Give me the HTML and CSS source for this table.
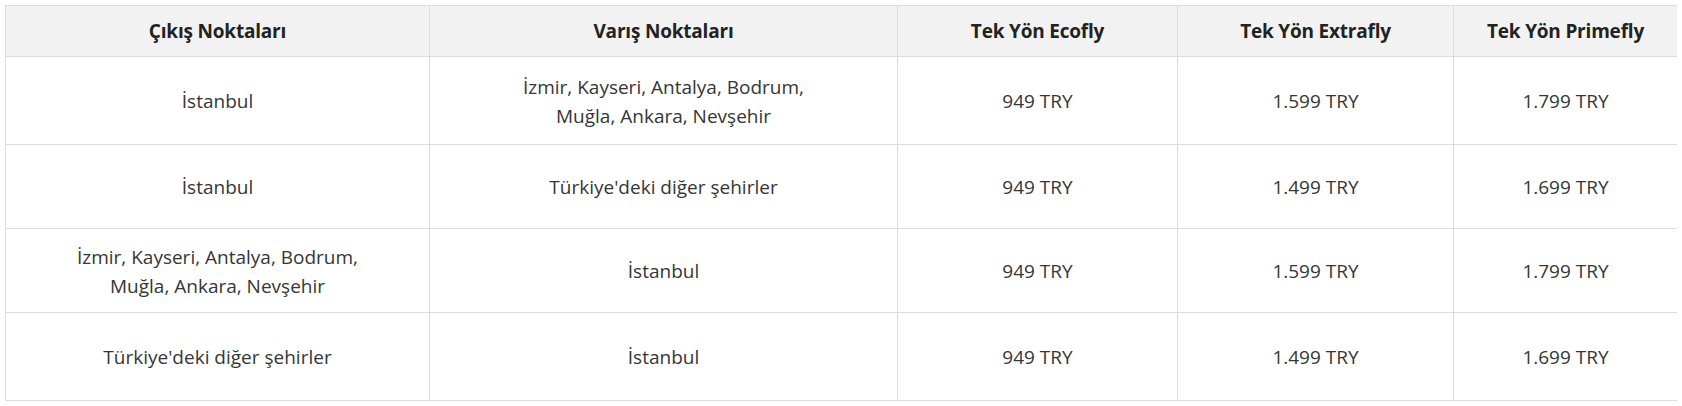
FILE: index.html
```html
<!DOCTYPE html>
<html lang="tr">
<head>
<meta charset="utf-8">
<link rel="stylesheet" href="styles.css">
</head>
<body>
<table class="fares">
  <colgroup>
    <col class="c1"><col class="c2"><col class="c3"><col class="c4"><col class="c5">
  </colgroup>
  <thead>
    <tr>
      <th>Çıkış Noktaları</th>
      <th>Varış Noktaları</th>
      <th>Tek Yön Ecofly</th>
      <th>Tek Yön Extrafly</th>
      <th>Tek Yön Primefly</th>
    </tr>
  </thead>
  <tbody>
    <tr>
      <td>İstanbul</td>
      <td>İzmir, Kayseri, Antalya, Bodrum,<br>Muğla, Ankara, Nevşehir</td>
      <td>949 TRY</td>
      <td>1.599 TRY</td>
      <td>1.799 TRY</td>
    </tr>
    <tr>
      <td>İstanbul</td>
      <td>Türkiye'deki diğer şehirler</td>
      <td>949 TRY</td>
      <td>1.499 TRY</td>
      <td>1.699 TRY</td>
    </tr>
    <tr>
      <td>İzmir, Kayseri, Antalya, Bodrum,<br>Muğla, Ankara, Nevşehir</td>
      <td>İstanbul</td>
      <td>949 TRY</td>
      <td>1.599 TRY</td>
      <td>1.799 TRY</td>
    </tr>
    <tr>
      <td>Türkiye'deki diğer şehirler</td>
      <td>İstanbul</td>
      <td>949 TRY</td>
      <td>1.499 TRY</td>
      <td>1.699 TRY</td>
    </tr>
  </tbody>
</table>
</body>
</html>
```
FILE: styles.css
```css
html, body {
  background: #ffffff;
}
body {
  margin: 5px;
  font-family: "Open Sans", "Noto Sans", sans-serif;
  color: #363636;
}
.fares {
  width: 100%;
  border-collapse: collapse;
  table-layout: fixed;
}
.c1 { width: 424px; }
.c2 { width: 468px; }
.c3 { width: 280px; }
.c4 { width: 276px; }
.c5 { width: 224px; }
.fares th,
.fares td {
  border: 1px solid #dcdcdc;
  text-align: center;
  vertical-align: middle;
  padding: 0 8px;
}
.fares th {
  background: #f2f2f2;
  height: 50px;
  font-size: 19px;
  font-weight: 700;
  color: #222222;
  letter-spacing: -0.2px;
}
.fares td {
  font-size: 19px;
  line-height: 29px;
  padding-top: 2px;
}
.fares tbody tr:nth-child(1) td,
.fares tbody tr:nth-child(4) td { height: 85px; }
.fares tbody tr:nth-child(2) td,
.fares tbody tr:nth-child(3) td { height: 81px; }
```
